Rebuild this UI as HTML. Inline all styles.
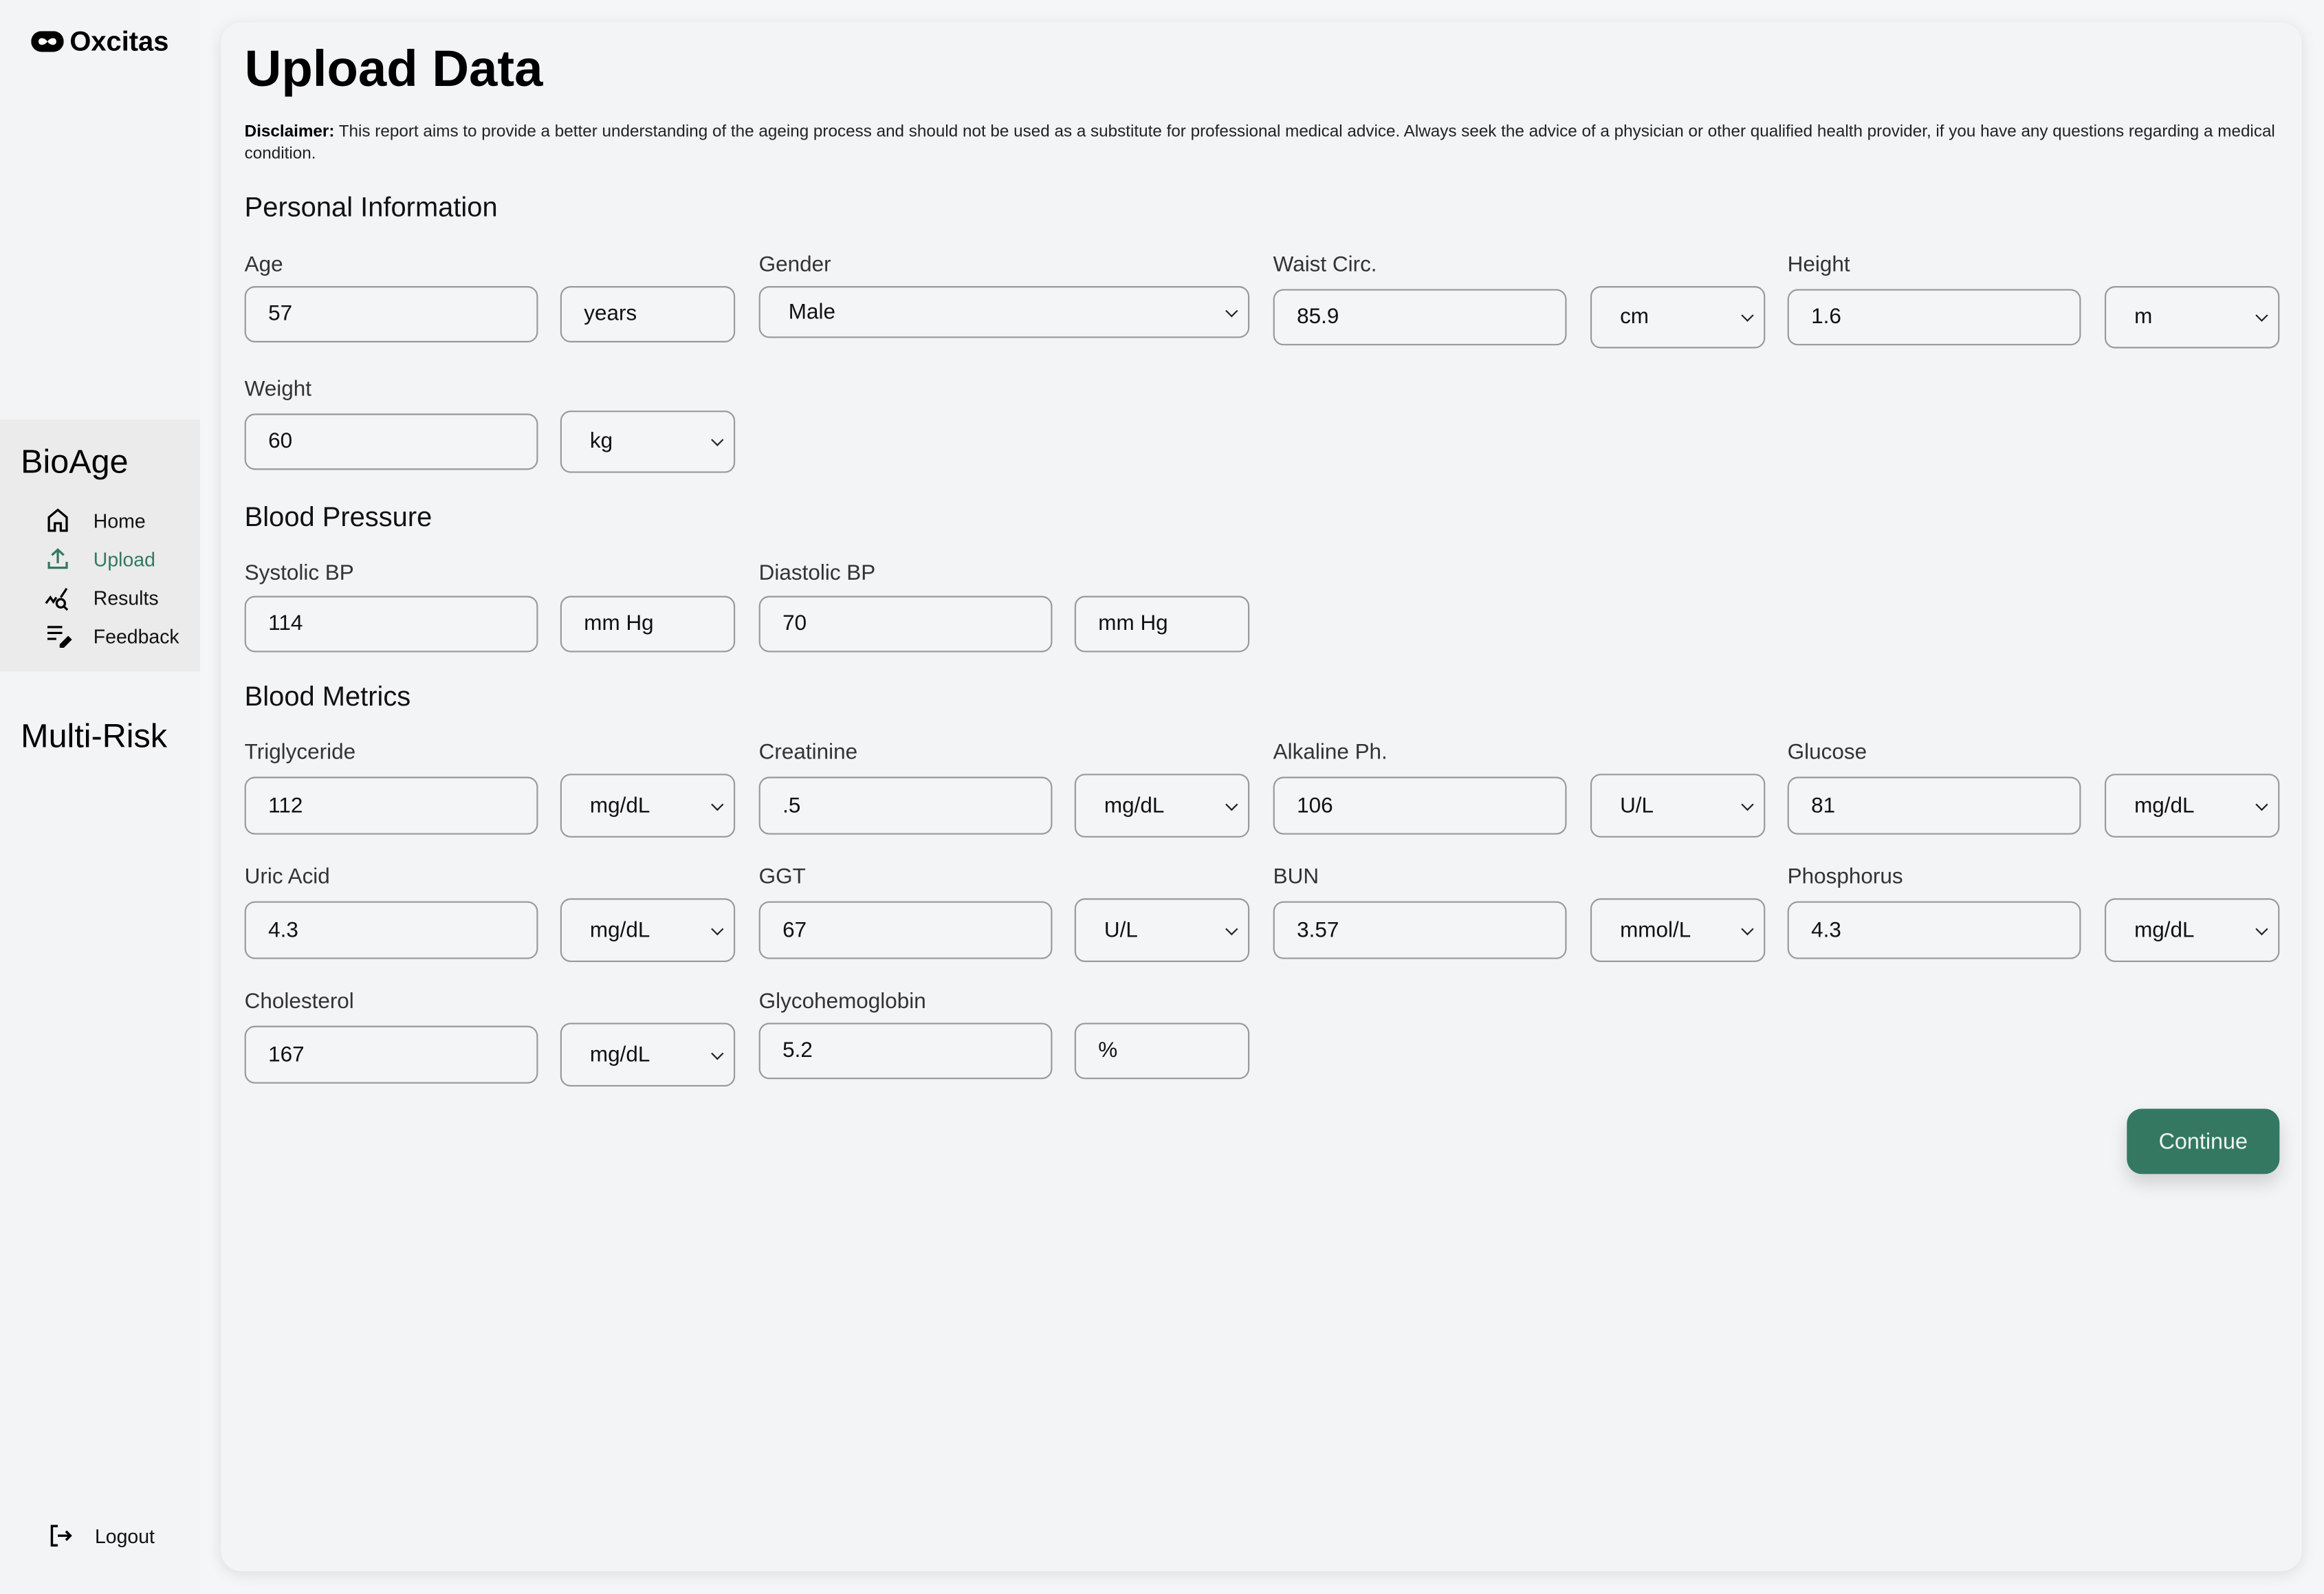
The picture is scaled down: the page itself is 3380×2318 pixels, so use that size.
<!DOCTYPE html>
<html><head><meta charset="utf-8">
<style>
*{box-sizing:border-box;margin:0;padding:0}
html,body{width:3380px;height:2318px;overflow:hidden;background:#f5f6f7;font-family:"Liberation Sans",Arial,sans-serif}
#s{position:absolute;left:0;top:0;width:1568px;height:1075.4px;transform:scale(2.15561);transform-origin:0 0}
.a{position:absolute}
.side{left:0;top:0;width:135px;height:1075px;background:#f3f4f6}
.main{left:149px;top:15px;width:1404px;height:1045px;background:#f3f4f6;border-radius:14px;box-shadow:0 2px 10px rgba(0,0,0,0.10)}
.lbl{font-size:14.6px;color:#333;line-height:18px}
.box{border:1px solid #999;border-radius:7px;font-size:14.6px;color:#111;padding-left:15px;display:flex;align-items:center;background:#f4f5f7}
.sel{padding-left:19px}
.sel::after{content:"";position:absolute;right:8px;top:50%;width:5px;height:5px;border-right:1.3px solid #222;border-bottom:1.3px solid #222;transform:translateY(-70%) rotate(45deg)}
.h2{font-size:18.5px;color:#111}
.nav{font-size:13.2px;color:#111;left:63px}
</style></head><body><div id="s">
<div class="a side"></div>
<div class="a" style="left:0;top:283px;width:135px;height:170px;background:#ebebeb"></div>
<svg class="a" style="left:21px;top:21px" width="22" height="14" viewBox="0 0 22 14"><rect x="0" y="0" width="22" height="14" rx="7" fill="#000"/><path d="M11 7c-2-3-6-3-6 0s4 3 6 0c2-3 6-3 6 0s-4 3-6 0z" fill="#fff"/></svg>
<div class="a" style="left:47px;top:17px;font-size:18.5px;font-weight:bold;color:#000">Oxcitas</div>
<div class="a" style="left:14px;top:299px;font-size:22.5px;color:#000">BioAge</div>
<svg class="a" style="left:31px;top:343px" width="16" height="16" viewBox="0 0 16 16" fill="none" stroke="#000" stroke-width="1.5"><path d="M2 15V6L8 1l6 5v9h-4v-5H6v5z"/></svg>
<div class="a nav" style="top:344px">Home</div>
<svg class="a" style="left:31px;top:369px" width="16" height="16" viewBox="0 0 16 16" fill="none" stroke="#347862" stroke-width="1.5"><path d="M8 11V2M4 5.5L8 1.8l4 3.7M2 10v4h12v-4"/></svg>
<div class="a nav" style="top:370px;color:#347862">Upload</div>
<svg class="a" style="left:30px;top:395px" width="18" height="18" viewBox="0 0 18 18" fill="none" stroke="#000" stroke-width="1.5"><path d="M1 12l3-4 2 3 2-3M11 8l4-6"/><circle cx="11" cy="12" r="2.8"/><path d="M13 14l2.5 2.5"/></svg>
<div class="a nav" style="top:396px">Results</div>
<svg class="a" style="left:31px;top:421px" width="18" height="16" viewBox="0 0 18 16" fill="none" stroke="#000" stroke-width="1.5"><path d="M1 2h10M1 6h10M1 10h6"/><path d="M10 14l5-5 1.5 1.5-5 5H10z" fill="#000"/></svg>
<div class="a nav" style="top:422px">Feedback</div>
<div class="a" style="left:14px;top:484px;font-size:22.5px;color:#000">Multi-Risk</div>
<svg class="a" style="left:33px;top:1028px" width="16" height="16" viewBox="0 0 16 16" fill="none" stroke="#000" stroke-width="1.6"><path d="M6 1.5H2v13h4M6 8h8.5M11.5 5l3 3-3 3"/></svg>
<div class="a nav" style="left:64px;top:1029px">Logout</div>

<div class="a main"></div>
<div class="a" style="left:165px;top:28px;font-size:34.5px;font-weight:bold;color:#000">Upload Data</div>
<div class="a" style="left:165px;top:82px;font-size:11.25px;line-height:15px;color:#222;white-space:nowrap"><b style="color:#000">Disclaimer:</b> This report aims to provide a better understanding of the ageing process and should not be used as a substitute for professional medical advice. Always seek the advice of a physician or other qualified health provider, if you have any questions regarding a medical<br>condition.</div>
<div class="a h2" style="left:165px;top:129px">Personal Information</div>

<div class="a lbl" style="left:165px;top:170px">Age</div>
<div class="a box" style="left:165px;top:193px;width:198px;height:38px">57</div>
<div class="a box" style="left:378px;top:193px;width:118px;height:38px">years</div>
<div class="a lbl" style="left:512px;top:170px">Gender</div>
<div class="a box sel" style="left:512px;top:193px;width:331px;height:35px">Male</div>
<div class="a lbl" style="left:859px;top:170px">Waist Circ.</div>
<div class="a box" style="left:859px;top:195px;width:198px;height:38px">85.9</div>
<div class="a box sel" style="left:1073px;top:193px;width:118px;height:42px">cm</div>
<div class="a lbl" style="left:1206px;top:170px">Height</div>
<div class="a box" style="left:1206px;top:195px;width:198px;height:38px">1.6</div>
<div class="a box sel" style="left:1420px;top:193px;width:118px;height:42px">m</div>

<div class="a lbl" style="left:165px;top:254px">Weight</div>
<div class="a box" style="left:165px;top:279px;width:198px;height:38px">60</div>
<div class="a box sel" style="left:378px;top:277px;width:118px;height:42px">kg</div>

<div class="a h2" style="left:165px;top:338px">Blood Pressure</div>
<div class="a lbl" style="left:165px;top:378px">Systolic BP</div>
<div class="a box" style="left:165px;top:402px;width:198px;height:38px">114</div>
<div class="a box" style="left:378px;top:402px;width:118px;height:38px">mm Hg</div>
<div class="a lbl" style="left:512px;top:378px">Diastolic BP</div>
<div class="a box" style="left:512px;top:402px;width:198px;height:38px">70</div>
<div class="a box" style="left:725px;top:402px;width:118px;height:38px">mm Hg</div>

<div class="a h2" style="left:165px;top:459px">Blood Metrics</div>

<div class="a lbl" style="left:165px;top:499px">Triglyceride</div>
<div class="a box" style="left:165px;top:524px;width:198px;height:39px">112</div>
<div class="a box sel" style="left:378px;top:522px;width:118px;height:43px">mg/dL</div>
<div class="a lbl" style="left:512px;top:499px">Creatinine</div>
<div class="a box" style="left:512px;top:524px;width:198px;height:39px">.5</div>
<div class="a box sel" style="left:725px;top:522px;width:118px;height:43px">mg/dL</div>
<div class="a lbl" style="left:859px;top:499px">Alkaline Ph.</div>
<div class="a box" style="left:859px;top:524px;width:198px;height:39px">106</div>
<div class="a box sel" style="left:1073px;top:522px;width:118px;height:43px">U/L</div>
<div class="a lbl" style="left:1206px;top:499px">Glucose</div>
<div class="a box" style="left:1206px;top:524px;width:198px;height:39px">81</div>
<div class="a box sel" style="left:1420px;top:522px;width:118px;height:43px">mg/dL</div>

<div class="a lbl" style="left:165px;top:583px">Uric Acid</div>
<div class="a box" style="left:165px;top:608px;width:198px;height:39px">4.3</div>
<div class="a box sel" style="left:378px;top:606px;width:118px;height:43px">mg/dL</div>
<div class="a lbl" style="left:512px;top:583px">GGT</div>
<div class="a box" style="left:512px;top:608px;width:198px;height:39px">67</div>
<div class="a box sel" style="left:725px;top:606px;width:118px;height:43px">U/L</div>
<div class="a lbl" style="left:859px;top:583px">BUN</div>
<div class="a box" style="left:859px;top:608px;width:198px;height:39px">3.57</div>
<div class="a box sel" style="left:1073px;top:606px;width:118px;height:43px">mmol/L</div>
<div class="a lbl" style="left:1206px;top:583px">Phosphorus</div>
<div class="a box" style="left:1206px;top:608px;width:198px;height:39px">4.3</div>
<div class="a box sel" style="left:1420px;top:606px;width:118px;height:43px">mg/dL</div>

<div class="a lbl" style="left:165px;top:667px">Cholesterol</div>
<div class="a box" style="left:165px;top:692px;width:198px;height:39px">167</div>
<div class="a box sel" style="left:378px;top:690px;width:118px;height:43px">mg/dL</div>
<div class="a lbl" style="left:512px;top:667px">Glycohemoglobin</div>
<div class="a box" style="left:512px;top:690px;width:198px;height:38px">5.2</div>
<div class="a box" style="left:725px;top:690px;width:118px;height:38px">%</div>

<div class="a" style="left:1435px;top:748px;width:103px;height:44px;background:#347862;border-radius:10px;color:#eef5f2;font-size:15px;display:flex;align-items:center;justify-content:center;box-shadow:0 6px 12px rgba(0,0,0,0.15)">Continue</div>
</div></body></html>
